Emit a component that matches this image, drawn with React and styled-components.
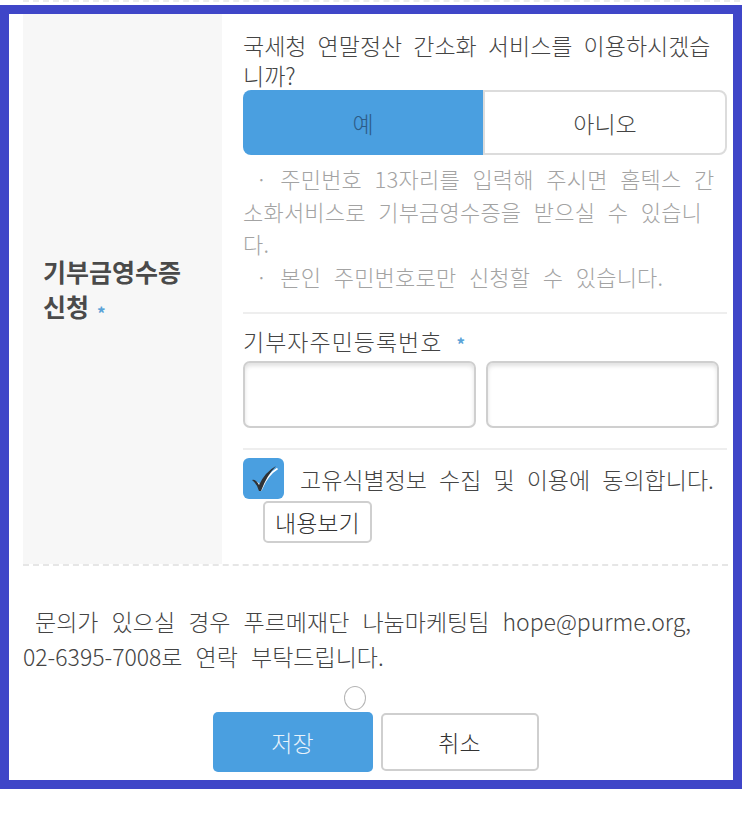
import React from "react";
import styled, { createGlobalStyle } from "styled-components";

const GlobalStyle = createGlobalStyle`
  body {
    margin: 0;
    background: #ffffff;
    font-family: "Noto Sans CJK KR", "Noto Sans", sans-serif;
    font-weight: 300;
    color: #444;
  }
  * { box-sizing: border-box; }
`;

const TopRule = styled.div`
  margin-left: 23px;
  width: 717px;
  border-top: 2px dashed #ececec;
`;

const Frame = styled.div`
  width: 742px;
  margin-top: 3px;
  border: 9px solid #3f46c8;
  padding: 0 5px 8px 14px;
`;

const FormRow = styled.div`
  display: flex;
  border-bottom: 2px dashed #e6e6e6;
`;

const Th = styled.div`
  width: 199px;
  flex-shrink: 0;
  background: #f7f7f7;
  display: flex;
  align-items: center;
  padding: 6px 0 0 20px;
`;

const Label = styled.div`
  font-size: 25px;
  font-weight: 700;
  line-height: 35px;
  color: #4a4a4a;
`;

const Req = styled.span`
  color: #5aa3d8;
  font-size: 17px;
  font-weight: 700;
  margin-left: ${(p) => (p.low ? 8 : 14)}px;
  vertical-align: ${(p) => (p.low ? "-3px" : "0")};
`;

const Td = styled.div`
  flex: 1;
  min-width: 0;
  padding: 16px 1px 0 21px;
  word-break: break-all;
`;

const Block = styled.div`
  padding-bottom: ${(p) => p.bottom || 20}px;
  ${(p) => p.divided && `border-top: 2px solid #eeeeee;`}
  ${(p) => p.top && `padding-top: ${p.top}px;`}
`;

const Question = styled.p`
  margin: 0;
  padding-right: 4px;
  font-size: 23px;
  line-height: 30px;
  word-spacing: 6px;
  color: #444;
`;

const Toggle = styled.div`
  display: flex;
  height: 65px;
`;

const ToggleBtn = styled.button`
  flex: 1;
  font-family: inherit;
  font-weight: 300;
  font-size: 23px;
  cursor: pointer;
  ${(p) =>
    p.active
      ? `
    background: #4a9fe0;
    color: #2d5c88;
    border: none;
    border-radius: 8px 0 0 8px;
  `
      : `
    background: #ffffff;
    color: #444;
    border: 2px solid #dcdcdc;
    border-radius: 0 8px 8px 0;
  `}
`;

const Help = styled.p`
  margin: 7px 0 0;
  padding-right: 8px;
  font-size: 22px;
  line-height: 32.5px;
  letter-spacing: 0.2px;
  word-spacing: 7.5px;
  color: #a3a3a3;
`;

const FieldLabel = styled.div`
  font-size: 23px;
  line-height: 30px;
  letter-spacing: 1px;
  color: #444;
`;

const InputRow = styled.div`
  display: flex;
  gap: 10px;
  margin-top: 2px;
  padding-right: 8px;
`;

const Input = styled.input`
  flex: 1;
  min-width: 0;
  width: 0;
  height: 67px;
  border: 2px solid #cfcfcf;
  border-radius: 7px;
  box-shadow: inset 0 3px 4px rgba(0, 0, 0, 0.12);
  background: #fff;
  font-size: 20px;
  padding: 0 10px;
`;

const Agree = styled.label`
  display: flex;
  align-items: center;
  gap: 16px;
  font-size: 23px;
  color: #444;
  word-spacing: 7px;
`;

const CheckBox = styled.span`
  width: 41px;
  height: 41px;
  border-radius: 6px;
  background: #4a9fe0;
  display: flex;
  align-items: center;
  justify-content: center;
  flex-shrink: 0;
`;

const ViewBtn = styled.button`
  display: block;
  margin: 2px 0 0 20px;
  height: 42px;
  padding: 0 10px;
  background: #fff;
  border: 2px solid #cfcfcf;
  border-radius: 5px;
  font-family: inherit;
  font-weight: 300;
  font-size: 23px;
  color: #333;
`;

const Notice = styled.p`
  margin: 38px 0 0;
  font-size: 23px;
  line-height: 35px;
  text-indent: 12px;
  word-spacing: 8px;
  color: #444;
`;

const NoWrap = styled.span`
  white-space: nowrap;
  word-spacing: 4px;
`;

const RadioRow = styled.div`
  display: flex;
  justify-content: center;
  padding: 12px 42px 2px 0;
`;

const Radio = styled.span`
  width: 22px;
  height: 24px;
  border-radius: 50%;
  border: 1.5px solid #b5b5b5;
  background: #fff;
`;

const Buttons = styled.div`
  display: flex;
  justify-content: center;
  align-items: center;
  gap: 8px;
`;

const Btn = styled.button`
  width: 160px;
  height: 60px;
  border-radius: 5px;
  font-family: inherit;
  font-weight: 300;
  font-size: 23px;
  cursor: pointer;
  ${(p) =>
    p.primary
      ? `
    background: #4a9fe0;
    border: none;
    color: #e8f2fb;
  `
      : `
    background: #fff;
    border: 2px solid #cfcfcf;
    color: #333;
    width: 158px;
    height: 58px;
  `}
`;

const Check = () => (
  <svg width="30" height="32" viewBox="0 0 30 32">
    <path d="M5 18 Q8 18 11 24 Q17 10 27 4" fill="none" stroke="#ffffff" strokeWidth="2" transform="translate(1.5 1.5)" />
    <path d="M3 17 Q7 16 10 22 Q16 9 27 3 Q18 12 12 28 L10 28 Q8 21 3 17 Z" fill="#2f3236" />
  </svg>
);

export default function App() {
  return (
    <>
      <GlobalStyle />
      <TopRule />
      <Frame>
        <FormRow>
          <Th>
            <Label>
              기부금영수증
              <br />
              신청<Req low>*</Req>
            </Label>
          </Th>
          <Td>
            <Block>
              <Question>국세청 연말정산 간소화 서비스를 이용하시겠습니까?</Question>
              <Toggle>
                <ToggleBtn active>예</ToggleBtn>
                <ToggleBtn>아니오</ToggleBtn>
              </Toggle>
              <Help>
                &nbsp;· 주민번호 13자리를 입력해 주시면 홈텍스 간소화서비스로 기부금영수증을 받으실 수 있습니다.
                <br />
                &nbsp;· 본인 주민번호로만 신청할 수 있습니다.
              </Help>
            </Block>
            <Block divided top={12}>
              <FieldLabel>
                기부자주민등록번호<Req>*</Req>
              </FieldLabel>
              <InputRow>
                <Input type="text" />
                <Input type="password" />
              </InputRow>
            </Block>
            <Block divided top={8} bottom={21}>
              <Agree>
                <CheckBox>
                  <Check />
                </CheckBox>
                고유식별정보 수집 및 이용에 동의합니다.
              </Agree>
              <ViewBtn>내용보기</ViewBtn>
            </Block>
          </Td>
        </FormRow>
        <Notice>
          문의가 있으실 경우 푸르메재단 나눔마케팅팀 hope@purme.org, <NoWrap>02-6395-7008로</NoWrap> 연락 부탁드립니다.
        </Notice>
        <RadioRow>
          <Radio />
        </RadioRow>
        <Buttons>
          <Btn primary>저장</Btn>
          <Btn>취소</Btn>
        </Buttons>
      </Frame>
    </>
  );
}
